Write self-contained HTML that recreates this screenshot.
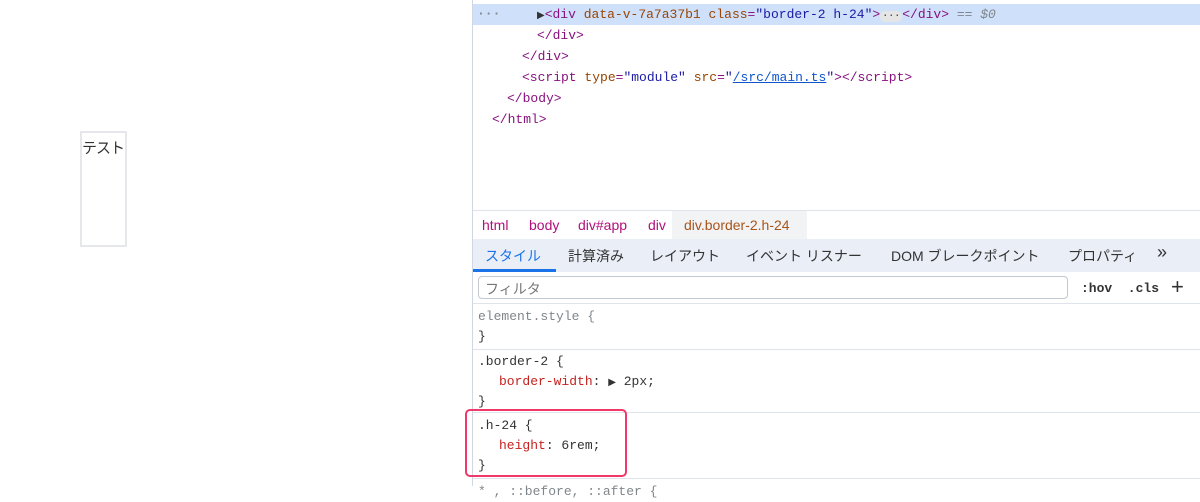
<!DOCTYPE html>
<html><head><meta charset="utf-8"><style>
*{margin:0;padding:0;box-sizing:border-box}
body{width:1200px;height:486px;background:#fff;position:relative;overflow:hidden;font-family:"Liberation Sans","Noto Sans CJK JP",sans-serif}
.box{position:absolute;left:80px;top:131px;width:47px;height:116px;border:2px solid #e5e7eb;font-size:15px;color:#333;line-height:20px;padding-top:6px;white-space:nowrap;letter-spacing:-1px}
.dt{position:absolute;left:472px;top:0;width:728px;height:486px;border-left:1px solid #d0d7e2;background:#fff}
.m{font-family:"Liberation Mono",monospace;font-size:13px;white-space:pre;position:absolute;line-height:21px}
.t{color:#881280}.a{color:#994500}.v{color:#1a1aa6}.g{color:#80868b}
.sel{position:absolute;left:0;top:4px;width:728px;height:21px;background:#cfe0fb}
.crumb{position:absolute;top:210px;left:0;width:728px;height:29px;border-top:1px solid #dfe3ea;font-size:14px;color:#b0107a}
.crumb span{position:absolute;top:6px}
.tabs{position:absolute;top:239px;left:0;width:728px;height:33px;background:#eaeff7;font-size:14px;color:#333}
.tabs span{position:absolute;top:7px}
.filt{position:absolute;top:272px;left:0;width:728px;height:32px;border-bottom:1px solid #dfe3ea}
.in{position:absolute;left:5px;top:4px;width:590px;height:23px;border:1px solid #c4c8cf;border-radius:4px;font-size:14px;color:#777;padding:2px 6px}
.r{border-bottom:1px solid #dfe3ea;position:absolute;left:0;width:728px}
.p{color:#c5221f}.k{color:#333}
</style></head><body>
<div class="box">テスト</div>
<div class="dt">
<div class="sel"></div>
<div class="m g" style="left:4px;top:3px;font-weight:bold">···</div>
<div class="m" style="left:64px;top:4px"><span style="color:#333;font-size:10px">▶</span><span class="t">&lt;div </span><span class="a">data-v-7a7a37b1 class</span><span class="t">=</span><span class="v">"border-2 h-24"</span><span class="t">&gt;</span><span style="background:#e5e5e5;border-radius:6px;color:#333;font-size:10px;padding:0 2px">···</span><span class="t">&lt;/div&gt;</span> <span class="g">== <i>$0</i></span></div>
<div class="m t" style="left:64px;top:25px">&lt;/div&gt;</div>
<div class="m t" style="left:49px;top:46px">&lt;/div&gt;</div>
<div class="m" style="left:49px;top:67px"><span class="t">&lt;script </span><span class="a">type</span><span class="t">=</span><span class="v">"module"</span> <span class="a">src</span><span class="t">=</span><span class="v">"<u style="color:#1155cc">/src/main.ts</u>"</span><span class="t">&gt;&lt;/script&gt;</span></div>
<div class="m t" style="left:34px;top:88px">&lt;/body&gt;</div>
<div class="m t" style="left:19px;top:109px">&lt;/html&gt;</div>
<div class="crumb"><span style="left:9px">html</span><span style="left:56px">body</span><span style="left:105px">div#app</span><span style="left:175px">div</span><div style="position:absolute;left:199px;top:0;width:135px;height:28px;background:#f1f3f4"></div><span style="left:211px;color:#a8551a">div.border-2.h-24</span></div>
<div class="tabs"><span style="left:12px;color:#1a73e8">スタイル</span><div style="position:absolute;left:0;top:30px;width:83px;height:3px;background:#1a73e8"></div><span style="left:95px">計算済み</span><span style="left:177px">レイアウト</span><span style="left:273px">イベント リスナー</span><span style="left:418px">DOM ブレークポイント</span><span style="left:595px">プロパティ</span><span style="left:684px;font-size:18px;top:3px">»</span></div>
<div class="filt"><div class="in">フィルタ</div><span class="m k" style="left:608px;top:6px;font-weight:bold">:hov  .cls</span><span style="position:absolute;left:698px;top:2px;font-size:22px;color:#333">+</span></div>
<div class="r" style="top:304px;height:46px"><div class="m g" style="left:5px;top:2px">element.style {</div><div class="m k" style="left:5px;top:22px">}</div></div>
<div class="r" style="top:350px;height:63px"><div class="m k" style="left:5px;top:1px">.border-2 {</div><div class="m" style="left:26px;top:21px"><span class="p">border-width</span><span class="k">: <span style="font-size:10px">▶</span> 2px;</span></div><div class="m k" style="left:5px;top:41px">}</div></div>
<div class="r" style="top:413px;height:66px"><div class="m k" style="left:5px;top:2px">.h-24 {</div><div class="m" style="left:26px;top:22px"><span class="p">height</span><span class="k">: 6rem;</span></div><div class="m k" style="left:5px;top:42px">}</div></div>
<div class="m g" style="left:5px;top:481px">* , ::before, ::after {</div>
<div style="position:absolute;left:-8px;top:409px;width:162px;height:68px;border:2px solid #f0386b;border-radius:5px"></div>
</div>
</body></html>
